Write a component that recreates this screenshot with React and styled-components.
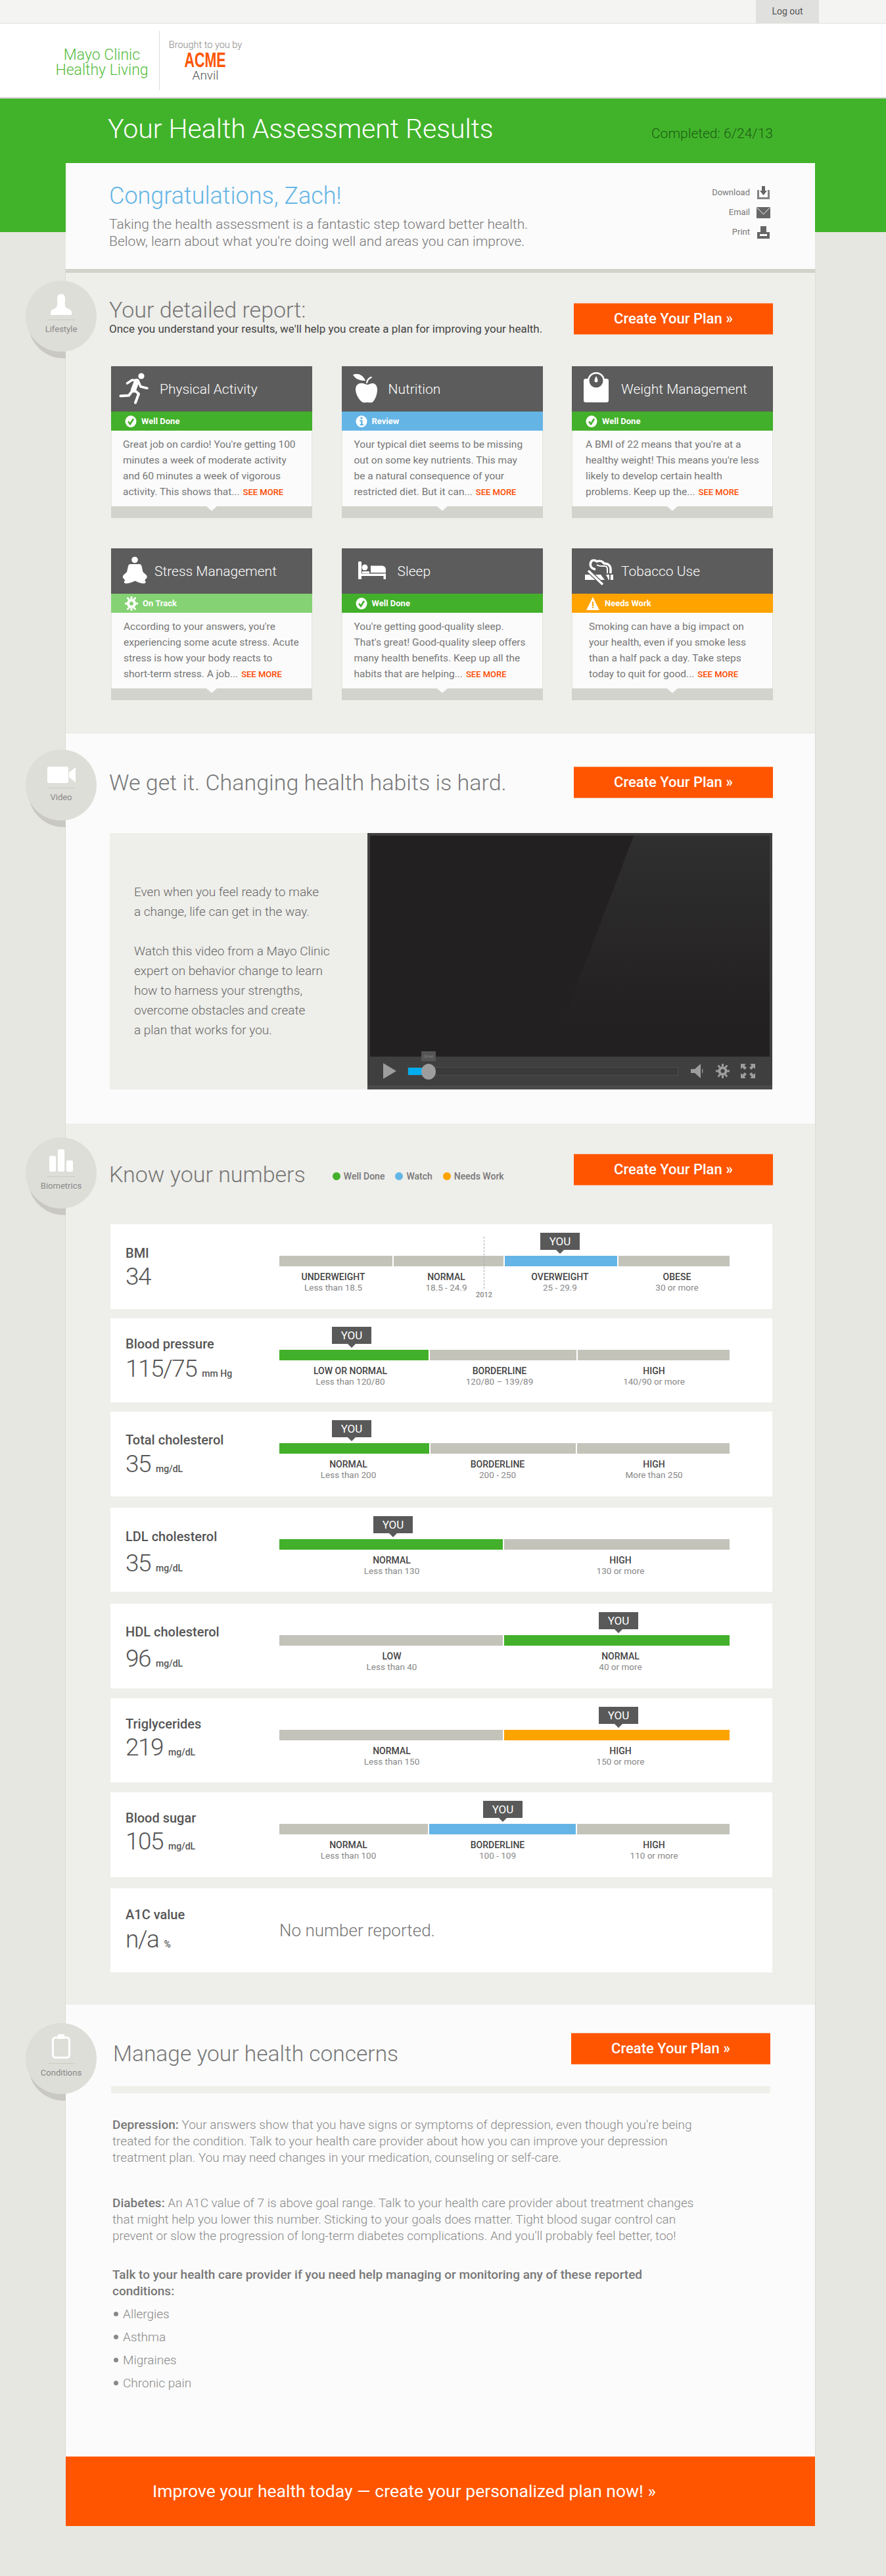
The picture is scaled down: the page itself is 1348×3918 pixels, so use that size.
import React from "react";
import styled, { createGlobalStyle } from "styled-components";

const ORANGE = "#ff5500";
const GREEN = "#42b02a";
const BLUE = "#64b5e6";
const AMBER = "#ffa300";
const GRAY = "#c3c3ba";

const Global = createGlobalStyle`
  body {
    margin: 0;
    background: #e7e7e1;
    font-family: Roboto, "Liberation Sans", Arial, sans-serif;
    font-weight: 300;
    color: #666;
  }
`;

const Page = styled.div`
  width: 1348px;
  padding-bottom: 77px;
`;

const TopBar = styled.div`
  display: flex;
  justify-content: flex-end;
  height: 35px;
  padding-right: 102px;
  background: #f4f4f2;
  border-bottom: 1px solid #e2e2dc;
`;

const LogOut = styled.a`
  width: 96px;
  line-height: 35px;
  text-align: center;
  font-size: 14px;
  font-weight: 400;
  background: #e0e0de;
  color: #555;
`;

const Header = styled.header`
  display: flex;
  align-items: center;
  height: 112px;
  background: #fff;
  border-bottom: 2px solid #ccc;
`;

const Mayo = styled.div`
  width: 160px;
  margin: 5px 7px 0 75px;
  text-align: center;
  font-size: 23px;
  line-height: 23px;
  color: #56bd40;
`;

const Sponsor = styled.div`
  display: flex;
  flex-direction: column;
  align-items: center;
  height: 90px;
  width: 140px;
  padding-top: 15px;
  box-sizing: border-box;
  border-left: 1px solid #ddd;
  color: #888;
  font-size: 14.5px;
  line-height: 14px;
`;

const Acme = styled.div`
  font-family: "Liberation Sans", Arial, sans-serif;
  font-size: 32px;
  line-height: 28px;
  font-weight: 700;
  color: ${ORANGE};
  transform: scaleX(0.67);
  margin-top: 1px;
`;

const Anvil = styled.div`
  font-size: 19px;
  line-height: 20px;
  color: #555;
`;

const Band = styled.div`
  display: flex;
  justify-content: space-between;
  align-items: flex-start;
  height: 203px;
  padding: 20px 172px 0 164px;
  box-sizing: border-box;
  background: #41b32b;
`;

const BandTitle = styled.h1`
  margin: 0;
  font-size: 41px;
  line-height: 52px;
  font-weight: 300;
  color: #fff;
`;

const Completed = styled.div`
  font-size: 21px;
  line-height: 30px;
  margin-top: 18px;
  color: #1d5c12;
`;

const Shell = styled.main`
  width: 1140px;
  margin: -105px 0 0 100px;
`;

const Intro = styled.section`
  display: flex;
  justify-content: space-between;
  height: 161px;
  padding: 28px 68px 0 66px;
  box-sizing: border-box;
  background: #fbfbfb;
`;

const IntroGreeting = styled.h2`
  margin: 0 0 8px;
  font-size: 36px;
  line-height: 44px;
  font-weight: 300;
  color: ${BLUE};
`;

const IntroText = styled.p`
  margin: 0;
  font-size: 21px;
  line-height: 26px;
  color: #777;
`;

const Actions = styled.div`
  display: flex;
  flex-direction: column;
  align-items: flex-end;
  gap: 10px;
  margin-top: 7px;
`;

const Action = styled.a`
  display: flex;
  align-items: center;
  gap: 10px;
  font-size: 13px;
  font-weight: 400;
  line-height: 20px;
  color: #777;
`;

const Section = styled.section`
  position: relative;
  height: ${(p) => p.$h}px;
  padding: ${(p) => p.$pt}px ${(p) => p.$pr || 64}px 0 ${(p) => p.$pl || 66}px;
  box-sizing: border-box;
  background: ${(p) => (p.$white ? "#fbfbfb" : "#eeeeea")};
  border-top: ${(p) => (p.$ruled ? "6px solid #d3d3cb" : "0")};
  box-shadow: 1px 0 0 #dcdcd5, -1px 0 0 #dcdcd5;
`;

const Badge = styled.div`
  position: absolute;
  left: -61px;
  top: ${(p) => p.$top}px;
  width: 108px;
  height: 108px;
  &::before {
    content: "";
    position: absolute;
    left: 4px;
    top: 10px;
    width: 108px;
    height: 108px;
    border-radius: 50%;
    background: #c9c9c2;
    clip-path: inset(0 51px 0 0);
  }
`;

const BadgeFace = styled.div`
  position: relative;
  display: flex;
  flex-direction: column;
  align-items: center;
  height: 100%;
  padding-top: ${(p) => p.$pt || 20}px;
  box-sizing: border-box;
  border-radius: 50%;
  background: #deded9;
`;

const BadgeRule = styled.div`
  width: 42px;
  height: 1px;
  margin: 7px 0 6px;
  background: #cbcbc4;
`;

const BadgeLabel = styled.div`
  font-size: 13px;
  font-weight: 400;
  line-height: 16px;
  color: #888;
`;

const Head = styled.div`
  display: flex;
  justify-content: space-between;
  align-items: ${(p) => p.$align};
  height: ${(p) => p.$h};
`;

const Title = styled.h2`
  margin: ${(p) => p.$mt || 0}px 0 0 ${(p) => p.$ml || 0}px;
  font-size: ${(p) => p.$size || 34}px;
  line-height: 40px;
  font-weight: 300;
  color: #777;
`;

const Sub = styled.p`
  margin: 0;
  font-size: 17px;
  line-height: 18px;
  font-weight: 400;
  color: #444;
`;

const PlanButton = styled.a`
  flex: none;
  width: 303px;
  height: 48px;
  margin-top: ${(p) => p.$mt || 0}px;
  line-height: 46px;
  text-align: center;
  font-size: 22px;
  font-weight: 500;
  color: #fff;
  background: ${ORANGE};
  border-top: 1px solid #ff8a55;
  border-bottom: 1px solid #ff8a55;
  box-sizing: border-box;
`;

const Cards = styled.div`
  display: grid;
  grid-template-columns: repeat(3, 306px);
  column-gap: 44.5px;
  row-gap: 46px;
  margin: 48px 0 0 3px;
`;

const Card = styled.article`
  display: flex;
  flex-direction: column;
  height: 231px;
`;

const CardHead = styled.div`
  display: flex;
  align-items: center;
  height: 69px;
  padding-left: ${(p) => p.$pl}px;
  background: #5c5c5c;
  color: #fff;
  font-size: 21px;
`;

const CardTitle = styled.span`
  margin-left: ${(p) => p.$ml}px;
`;

const Status = styled.div`
  display: flex;
  align-items: center;
  gap: 7px;
  height: 29px;
  padding-left: 21px;
  background: ${(p) => p.$color};
  color: #fff;
  font-size: 13px;
  font-weight: 700;
`;

const CardBody = styled.p`
  position: relative;
  flex: 1;
  margin: 0;
  padding: 9px 0 0 ${(p) => p.$pl}px;
  background: #fbfbfb;
  font-size: 15.5px;
  line-height: 24px;
  font-weight: 400;
  color: #777;
  border-left: 1px solid #e4e4de;
  border-right: 1px solid #e4e4de;
  &::after {
    content: "";
    position: absolute;
    left: 50%;
    bottom: -7px;
    margin-left: -8px;
    border: 8px solid transparent;
    border-bottom: 0;
    border-top: 7px solid #fbfbfb;
  }
`;

const SeeMore = styled.a`
  margin-left: 5px;
  font-size: 13px;
  font-weight: 500;
  color: #ff4a00;
`;

const CardFoot = styled.div`
  height: 18px;
  background: #d3d3cd;
`;

const VideoBlock = styled.div`
  display: flex;
  height: 390px;
  margin: 53px 0 0 1px;
`;

const VideoText = styled.div`
  display: flex;
  flex-direction: column;
  justify-content: center;
  gap: 30px;
  width: 392px;
  padding-left: 37px;
  box-sizing: border-box;
  background: #eeeeea;
  font-size: 19px;
  line-height: 30px;
  color: #666;
`;

const Player = styled.div`
  display: flex;
  flex-direction: column;
  width: 616px;
  background: #3f3f3f;
`;

const Screen = styled.div`
  position: relative;
  height: 336px;
  margin: 4px 4px 0;
  background: #222021;
  overflow: hidden;
  &::after {
    content: "";
    position: absolute;
    inset: 0;
    background: linear-gradient(#302f2f, #222021 85%);
    clip-path: polygon(66% 0, 100% 0, 100% 100%, 45% 100%);
  }
`;

const Controls = styled.div`
  position: relative;
  display: flex;
  align-items: center;
  height: 44px;
  padding: 0 25px 0 24px;
  border-bottom: 6px solid #4a4a4a;
`;

const Track = styled.div`
  position: relative;
  width: 412px;
  height: 13px;
  margin: 0 19px 0 17px;
  background: #3a3a3a;
  border: 1px solid #4c4c4c;
  box-sizing: border-box;
`;

const TrackFill = styled.div`
  height: 100%;
  background: #00aeef;
`;

const Knob = styled.div`
  position: absolute;
  top: -6px;
  left: 20px;
  width: 22px;
  height: 24px;
  border-radius: 50%;
  background: #9d9d9d;
`;

const TimeTip = styled.div`
  position: absolute;
  top: -25px;
  left: 20px;
  width: 22px;
  height: 15px;
  background: #555;
  color: #999;
  font-size: 6px;
  line-height: 15px;
  text-align: center;
`;

const ControlIcons = styled.div`
  display: flex;
  align-items: center;
  gap: 17px;
`;

const LegendRow = styled.div`
  display: flex;
  align-items: center;
  gap: 16px;
  flex: 1;
  margin: 20px 0 0 41px;
`;

const LegendItem = styled.span`
  display: flex;
  align-items: center;
  gap: 5px;
  font-size: 14px;
  font-weight: 500;
  color: #777;
  &::before {
    content: "";
    width: 12px;
    height: 12px;
    border-radius: 50%;
    background: ${(p) => p.$color};
  }
`;

const Rows = styled.div`
  margin: 59px 0 0 2px;
  width: 1007px;
`;

const Row = styled.div`
  display: flex;
  height: 128.5px;
  margin-top: ${(p) => p.$mt}px;
  background: #fff;
`;

const Info = styled.div`
  width: 257px;
  padding: ${(p) => p.$top}px 0 0 23px;
  box-sizing: border-box;
`;

const InfoName = styled.div`
  font-size: 20px;
  line-height: 24px;
  font-weight: 500;
  color: #555;
`;

const InfoValue = styled.div`
  display: flex;
  align-items: baseline;
  gap: 8px;
  margin-top: ${(p) => p.$mt}px;
  font-size: 37px;
  letter-spacing: -1.5px;
  line-height: 40px;
  color: #555;
`;

const Unit = styled.span`
  font-size: 14px;
  font-weight: 500;
  letter-spacing: 0;
  color: #555;
`;

const Scale = styled.div`
  position: relative;
  padding-top: 48px;
  width: 685px;
`;

const Bar = styled.div`
  display: flex;
  gap: 2px;
  height: 16px;
`;

const Segment = styled.div`
  width: ${(p) => p.$w}px;
  background: ${(p) => p.$color};
`;

const Labels = styled.div`
  display: flex;
  margin-top: 8px;
  text-align: center;
`;

const Label = styled.div`
  flex: none;
  width: ${(p) => p.$w}px;
`;

const LabelName = styled.div`
  font-size: 14px;
  line-height: 16px;
  font-weight: 500;
  color: #444;
`;

const LabelSub = styled.div`
  font-size: 13.5px;
  line-height: 16px;
  font-weight: 400;
  color: #888;
`;

const You = styled.div`
  position: absolute;
  top: 13px;
  left: ${(p) => p.$x}px;
  width: 60px;
  margin-left: -30px;
  height: 26px;
  line-height: 26px;
  text-align: center;
  font-size: 17px;
  font-weight: 400;
  color: #fff;
  background: #595959;
  &::after {
    content: "";
    position: absolute;
    left: 50%;
    top: 26px;
    margin-left: -6px;
    border: 6px solid transparent;
    border-bottom: 0;
    border-top: 6px solid #595959;
  }
`;

const Marker = styled.div`
  position: absolute;
  left: 311px;
  top: 19px;
  height: 79px;
  border-left: 1px dashed #aaa;
`;

const MarkerYear = styled.div`
  position: absolute;
  left: 299px;
  top: 101px;
  font-size: 11px;
  font-weight: 500;
  color: #888;
`;

const NoNumber = styled.div`
  font-size: 26px;
  line-height: 128px;
  color: #777;
`;

const Rule = styled.div`
  height: 11px;
  margin: 33px 0 35px;
  background: #f0f0ea;
`;

const Copy = styled.p`
  margin: 0 0 ${(p) => p.$mb}px 2px;
  font-size: 19px;
  line-height: 25px;
  color: #888;
  strong {
    font-weight: 500;
    color: #777;
  }
`;

const Concerns = styled.ul`
  margin: 5px 0 0 2px;
  padding: 0;
  list-style: none;
`;

const Concern = styled.li`
  display: flex;
  align-items: center;
  gap: 7px;
  font-size: 19px;
  line-height: 35px;
  color: #888;
  &::before {
    content: "";
    width: 7px;
    height: 7px;
    margin-left: 2px;
    border-radius: 50%;
    background: #888;
  }
`;

const Banner = styled.a`
  display: block;
  height: 106px;
  padding-left: 132px;
  line-height: 104px;
  font-size: 26.5px;
  font-weight: 400;
  color: #fff;
  background: ${ORANGE};
  border-top: 1px solid #ff8a55;
  box-sizing: border-box;
`;

/* icons, drawn to match the 60x60 crops of the reference */
const Runner = () => (
  <svg width="60" height="60" viewBox="0 0 60 60" fill="none" stroke="#fff" strokeLinecap="round" strokeLinejoin="round">
    <circle cx="43" cy="10" r="4.6" fill="#fff" stroke="none" />
    <path d="M21.5 21 29 16 38 17M38 17l4 9 10 2.5" strokeWidth="3.5" />
    <path d="M36 18 31 31" strokeWidth="8" />
    <path d="M32 31l7 6-5 13.5" strokeWidth="4" />
    <path d="M29 33l-5 6.5-12.5 .8" strokeWidth="4" />
  </svg>
);

const Apple = () => (
  <svg width="60" height="60" viewBox="0 0 60 60" fill="#fff">
    <path d="M14 30c0-7 6-10 11-9 3 .6 5 2 7 2s4-1.5 7-2c4.5-.6 8 3.5 8 9.5 0 7-3 15.5-7 19-2 1.5-5 .5-8 .5s-6 1-8-.5c-5-3.5-10-12-10-19.5z" />
    <path d="M10 8c7-3 15-.5 19 9-7 0-15-1.5-19-9z" />
    <path d="M30 21l2 0c.6-4 3-7 7-8.5l-1-2c-5 2-8 6-8 10.5z" />
  </svg>
);

const WeighScale = () => (
  <svg width="60" height="60" viewBox="0 0 60 60" fill="#fff">
    <path d="M16 14h32c2 0 3 1 3 3v30c0 2-1 3-3 3H16c-2 0-3-1-3-3V17c0-2 1-3 3-3z" />
    <circle cx="32" cy="17" r="13" />
    <circle cx="32" cy="17" r="10.5" fill="#5c5c5c" />
    <path d="M32 10c1.5 3 2.5 5 2.5 7a2.5 2.5 0 0 1-5 0c0-2 1-4 2.5-7z" />
  </svg>
);

const Meditate = () => (
  <svg width="60" height="60" viewBox="0 0 60 60" fill="#fff">
    <circle cx="33" cy="12.5" r="4.8" />
    <path d="M26 19h14c2 0 3 1 3.5 3l2 9 5 4.5c1.5 1.5 1.5 3.5 .5 5l-3 3c3 2 1.500 5-1 5-4 0-8-1.500-13.500-4-5.500 2.500-10 4-14 4-2.500 0-4-3-1-5l-3-3c-1-1.500-1-3.500 .5-5l5-4.500 2-9c.5-2 1.500-3 3.500-3z" />
  </svg>
);

const Bed = () => (
  <svg width="60" height="60" viewBox="0 0 60 60" fill="#fff">
    <rect x="18" y="15" width="5" height="27" rx="1" />
    <rect x="18" y="33.5" width="42" height="3.5" />
    <rect x="56.5" y="33.5" width="3.5" height="8.5" />
    <circle cx="28" cy="24" r="4.5" />
    <path d="M24 30h11v3H24z" />
    <path d="M37 21.5h17c3.5 0 6 2.5 6 6V32H37z" />
  </svg>
);

const NoSmoke = () => (
  <svg width="60" height="60" viewBox="0 0 60 60" fill="none" stroke="#fff">
    <path d="M31 27c-7-1-9-6-7-11 1-3 6-4 9-1 5-2 9 0 11 3 7 0 10 4 10 9v6" strokeWidth="3.5" />
    <path d="M33 20c4 3 8 2 12 2 3 0 4 2 4 5v6" strokeWidth="2" />
    <path d="M15 35h24l6 8H15zM47 35h5v8h-1zM54 35h4v8h-4z" fill="#fff" stroke="none" />
    <path d="M20 29 42 50" stroke="#5c5c5c" strokeWidth="6" />
    <path d="M20 29 42 50" strokeWidth="3.5" />
  </svg>
);

const statusIcons = {
  check: (
    <svg width="18" height="20" viewBox="0 0 18 20">
      <ellipse cx="9" cy="10" rx="8.5" ry="9" fill="#fff" />
      <path d="M5 10l3 4 5-8" fill="none" stroke={GREEN} strokeWidth="2.5" />
    </svg>
  ),
  info: (
    <svg width="18" height="20" viewBox="0 0 18 20">
      <ellipse cx="9" cy="10" rx="8.5" ry="9" fill="#fff" />
      <path d="M7.5 3.5h3v3h-3zM6.5 8h4v6h1.5v2H6.5v-2H8v-4H6.5z" fill={BLUE} />
    </svg>
  ),
  gear: (
    <svg width="20" height="22" viewBox="0 0 20 22" fill="#fff">
      <path d="M8.5 0h3v4h-3zM8.5 18h3v4h-3zM0 9.5h4v3H0zM16 9.5h4v3h-4zM2.5 3l2-2 3 3-2 2zM15.5 1l2 2-3 3-2-2zM2.5 19l3-3 2 2-3 3zM14.5 16l3 3-2 2-3-3z" />
      <circle cx="10" cy="11" r="7" />
      <circle cx="10" cy="11" r="3" fill="#84d273" />
    </svg>
  ),
  warn: (
    <svg width="22" height="20" viewBox="0 0 22 20">
      <path d="M11 0l10 20H1z" fill="#fff" />
      <path d="M10 7h2v7h-2zM10 15h2v2h-2z" fill={AMBER} />
    </svg>
  ),
};

const reportCards = [
  {
    title: "Physical Activity", icon: <Runner />, headPad: 3, ml: 11,
    status: "Well Done", color: GREEN, kind: "check", pad: 17,
    lines: ["Great job on cardio! You're getting 100", "minutes a week of moderate activity", "and 60 minutes a week of vigorous", "activity. This shows that..."],
  },
  {
    title: "Nutrition", icon: <Apple />, headPad: 7, ml: 4,
    status: "Review", color: BLUE, kind: "info", pad: 18,
    lines: ["Your typical diet seems to be missing", "out on some key nutrients. This may", "be a natural consequence of your", "restricted diet. But it can..."],
  },
  {
    title: "Weight Management", icon: <WeighScale />, headPad: 5, ml: 10,
    status: "Well Done", color: GREEN, kind: "check", pad: 20,
    lines: ["A BMI of 22 means that you're at a", "healthy weight! This means you're less", "likely to develop certain health", "problems. Keep up the..."],
  },
  {
    title: "Stress Management", icon: <Meditate />, headPad: 3, ml: 3,
    status: "On Track", color: "#84d273", kind: "gear", pad: 18,
    lines: ["According to your answers, you're", "experiencing some acute stress. Acute", "stress is how your body reacts to", "short-term stress. A job..."],
  },
  {
    title: "Sleep", icon: <Bed />, headPad: 7, ml: 18,
    status: "Well Done", color: GREEN, kind: "check", pad: 18,
    lines: ["You're getting good-quality sleep.", "That's great! Good-quality sleep offers", "many health benefits. Keep up all the", "habits that are helping..."],
  },
  {
    title: "Tobacco Use", icon: <NoSmoke />, headPad: 5, ml: 10,
    status: "Needs Work", color: AMBER, kind: "warn", pad: 25,
    lines: ["Smoking can have a big impact on", "your health, even if you smoke less", "than a half pack a day. Take steps", "today to quit for good..."],
  },
];

const w3 = [216, 238, 232];
const w2 = [342, 354];

const metrics = [
  {
    name: "BMI", value: "34", mt: 0, top: 32, drop: 36, you: 427, marker: true,
    segs: [[172, GRAY], [168, GRAY], [171, BLUE], [170, GRAY]],
    bands: [["UNDERWEIGHT", "Less than 18.5", 164], ["NORMAL", "18.5 - 24.9", 180], ["OVERWEIGHT", "25 - 29.9", 166], ["OBESE", "30 or more", 190]],
  },
  {
    name: "Blood pressure", value: "115/75", unit: "mm Hg", mt: 14, top: 27, drop: 38, you: 110,
    segs: [[227, GREEN], [223, GRAY], [231, GRAY]],
    bands: [["LOW OR NORMAL", "Less than 120/80", w3[0]], ["BORDERLINE", "120/80 – 139/89", w3[1]], ["HIGH", "140/90 or more", w3[2]]],
  },
  {
    name: "Total cholesterol", value: "35", unit: "mg/dL", mt: 14, top: 31, drop: 37, you: 110,
    segs: [[228, GREEN], [221, GRAY], [232, GRAY]],
    bands: [["NORMAL", "Less than 200", w3[0] - 6], ["BORDERLINE", "200 - 250", w3[1] + 6], ["HIGH", "More than 250", w3[2]]],
  },
  {
    name: "LDL cholesterol", value: "35", unit: "mg/dL", mt: 17, top: 32, drop: 41, you: 173,
    segs: [[340, GREEN], [343, GRAY]],
    bands: [["NORMAL", "Less than 130", w2[0]], ["HIGH", "130 or more", w2[1]]],
  },
  {
    name: "HDL cholesterol", value: "96", unit: "mg/dL", mt: 18, top: 30.5, drop: 41, you: 516,
    segs: [[340, GRAY], [343, GREEN]],
    bands: [["LOW", "Less than 40", w2[0]], ["NORMAL", "40 or more", w2[1]]],
  },
  {
    name: "Triglycerides", value: "219", unit: "mg/dL", mt: 15, top: 27, drop: 36, you: 516,
    segs: [[340, GRAY], [343, AMBER]],
    bands: [["NORMAL", "Less than 150", w2[0]], ["HIGH", "150 or more", w2[1]]],
  },
  {
    name: "Blood sugar", value: "105", unit: "mg/dL", mt: 15, top: 27, drop: 36, you: 340,
    segs: [[226, GRAY], [223, BLUE], [232, GRAY]],
    bands: [["NORMAL", "Less than 100", w3[0] - 6], ["BORDERLINE", "100 - 109", w3[1] + 6], ["HIGH", "110 or more", w3[2]]],
  },
];

function PlanHead({ children, stacked }) {
  return (
    <Head $align={stacked ? "flex-start" : "center"} $h={stacked ? "auto" : "48px"}>
      {children}
      <PlanButton $mt={stacked ? 10 : 0}>Create Your Plan »</PlanButton>
    </Head>
  );
}

function SectionBadge({ top, pt, icon, label }) {
  return (
    <Badge $top={top}>
      <BadgeFace $pt={pt}>
        {icon}
        <BadgeRule />
        <BadgeLabel>{label}</BadgeLabel>
      </BadgeFace>
    </Badge>
  );
}

function ReportCard({ card }) {
  return (
    <Card>
      <CardHead $pl={card.headPad}>
        {card.icon}
        <CardTitle $ml={card.ml}>{card.title}</CardTitle>
      </CardHead>
      <Status $color={card.color}>
        {statusIcons[card.kind]}
        {card.status}
      </Status>
      <CardBody $pl={card.pad}>
        {card.lines.map((line, i) => (
          <React.Fragment key={line}>
            {line}
            {i < card.lines.length - 1 ? <br /> : <SeeMore>SEE MORE</SeeMore>}
          </React.Fragment>
        ))}
      </CardBody>
      <CardFoot />
    </Card>
  );
}

function MetricRow({ m }) {
  return (
    <Row $mt={m.mt}>
      <Info $top={m.top}>
        <InfoName>{m.name}</InfoName>
        <InfoValue $mt={m.drop - 32}>
          {m.value}
          {m.unit && <Unit>{m.unit}</Unit>}
        </InfoValue>
      </Info>
      <Scale>
        <You $x={m.you}>YOU</You>
        {m.marker && <Marker />}
        {m.marker && <MarkerYear>2012</MarkerYear>}
        <Bar>
          {m.segs.map(([w, color], i) => (
            <Segment key={i} $w={w} $color={color} />
          ))}
        </Bar>
        <Labels>
          {m.bands.map(([name, sub, w]) => (
            <Label key={name} $w={w}>
              <LabelName>{name}</LabelName>
              <LabelSub>{sub}</LabelSub>
            </Label>
          ))}
        </Labels>
      </Scale>
    </Row>
  );
}

export default function App() {
  return (
    <Page>
      <Global />
      <TopBar>
        <LogOut>Log out</LogOut>
      </TopBar>
      <Header>
        <Mayo>
          Mayo Clinic
          <br />
          Healthy Living
        </Mayo>
        <Sponsor>
          Brought to you by
          <Acme>ACME</Acme>
          <Anvil>Anvil</Anvil>
        </Sponsor>
      </Header>
      <Band>
        <BandTitle>Your Health Assessment Results</BandTitle>
        <Completed>Completed: 6/24/13</Completed>
      </Band>
      <Shell>
        <Intro>
          <div>
            <IntroGreeting>Congratulations, Zach!</IntroGreeting>
            <IntroText>
              Taking the health assessment is a fantastic step toward better health.
              <br />
              Below, learn about what you're doing well and areas you can improve.
            </IntroText>
          </div>
          <Actions>
            <Action>
              Download
              <svg width="21" height="20" viewBox="0 0 21 20" fill="#666">
                <path d="M8 0h5v7h3l-5.5 7L5 7h3z" />
                <path d="M1 6h3v11h13V6h3v14H1z" opacity=".8" />
              </svg>
            </Action>
            <Action>
              Email
              <svg width="21" height="17" viewBox="0 0 21 17">
                <rect width="21" height="17" rx="1" fill="#666" />
                <path d="M1 1l9.5 10L20 1" fill="none" stroke="#fbfbfb" />
              </svg>
            </Action>
            <Action>
              Print
              <svg width="21" height="19" viewBox="0 0 21 19" fill="#666">
                <path d="M6 0h9v9H6z" />
                <path d="M1 9h19v10H1z" />
                <path d="M5 12h11v3H5z" fill="#fbfbfb" />
              </svg>
            </Action>
          </Actions>
        </Intro>

        <Section $h={707} $pt={36} $ruled>
          <SectionBadge
            top={12}
            icon={
              <svg width="34" height="32" viewBox="0 0 34 32" fill="#fff">
                <path d="M17 0c4 0 6 3 6 7 0 6-1 10 1 13 1 3 9 3 9 8v4H1v-4c0-5 8-5 9-8 2-3 1-7 1-13 0-4 2-7 6-7z" />
              </svg>
            }
            label="Lifestyle"
          />
          <PlanHead stacked>
            <div>
              <Title>Your detailed report:</Title>
              <Sub>Once you understand your results, we'll help you create a plan for improving your health.</Sub>
            </div>
          </PlanHead>
          <Cards>
            {reportCards.map((card) => (
              <ReportCard key={card.title} card={card} />
            ))}
          </Cards>
        </Section>

        <Section $h={593} $pt={50} $white>
          <SectionBadge
            top={24}
            pt={26}
            icon={
              <svg width="43" height="25" viewBox="0 0 43 25" fill="#fff">
                <rect width="32" height="25" rx="3" />
                <path d="M33 9l10-8v23l-10-8z" />
              </svg>
            }
            label="Video"
          />
          <PlanHead>
            <Title>We get it. Changing health habits is hard.</Title>
          </PlanHead>
          <VideoBlock>
            <VideoText>
              <div>
                Even when you feel ready to make
                <br />a change, life can get in the way.
              </div>
              <div>
                Watch this video from a Mayo Clinic
                <br />
                expert on behavior change to learn
                <br />
                how to harness your strengths,
                <br />
                overcome obstacles and create
                <br />a plan that works for you.
              </div>
            </VideoText>
            <Player>
              <Screen />
              <Controls>
                <svg width="20" height="24" viewBox="0 0 20 24" fill="#9d9d9d">
                  <path d="M0 0l20 12L0 24z" />
                </svg>
                <Track>
                  <TrackFill style={{ width: 22 }} />
                  <Knob />
                  <TimeTip>00:40</TimeTip>
                </Track>
                <ControlIcons>
                  <svg width="21" height="22" viewBox="0 0 21 22" fill="#9d9d9d">
                    <path d="M0 8h6l9-8v22l-9-8H0zM17 7c2 2 2 6 0 8z" />
                  </svg>
                  <svg width="21" height="22" viewBox="0 0 21 22" fill="#9d9d9d">
                    <path d="M9 0h3v4H9zM9 18h3v4H9zM0 9.5h4v3H0zM17 9.5h4v3h-4zM2.5 3.5l2-2 3 3-2 2zM16.5 1.5l2 2-3 3-2-2zM2.5 18.5l3-3 2 2-3 3zM15.5 15.5l3 3-2 2-3-3z" />
                    <path fillRule="evenodd" d="M10.5 4a7 7 0 1 1 0 14 7 7 0 0 1 0-14zm0 4a3 3 0 1 0 0 6 3 3 0 0 0 0-6z" />
                  </svg>
                  <svg width="22" height="22" viewBox="0 0 22 22" fill="#9d9d9d">
                    <path d="M0 0h8L5.5 2.5 9 6 6 9 2.5 5.5 0 8zM22 0v8l-2.5-2.5L16 9l-3-3 3.5-3.5L14 0zM0 22v-8l2.5 2.5L6 13l3 3-3.5 3.5L8 22zM22 22h-8l2.5-2.5L13 16l3-3 3.5 3.5L22 14z" />
                  </svg>
                </ControlIcons>
              </Controls>
            </Player>
          </VideoBlock>
        </Section>

        <Section $h={1340} $pt={46}>
          <SectionBadge
            top={21}
            pt={18}
            icon={
              <svg width="36" height="34" viewBox="0 0 36 34" fill="#fff">
                <rect x="0" y="10" width="10" height="24" rx="2" />
                <rect x="13" y="0" width="10" height="34" rx="2" />
                <rect x="26" y="17" width="10" height="17" rx="2" />
              </svg>
            }
            label="Biometrics"
          />
          <PlanHead>
            <Title $mt={14}>Know your numbers</Title>
            <LegendRow>
              <LegendItem $color={GREEN}>Well Done</LegendItem>
              <LegendItem $color={BLUE}>Watch</LegendItem>
              <LegendItem $color={AMBER}>Needs Work</LegendItem>
            </LegendRow>
          </PlanHead>
          <Rows>
            {metrics.map((m) => (
              <MetricRow key={m.name} m={m} />
            ))}
            <Row $mt={17}>
              <Info $top={28}>
                <InfoName>A1C value</InfoName>
                <InfoValue $mt={6}>
                  n/a
                  <Unit>%</Unit>
                </InfoValue>
              </Info>
              <NoNumber>No number reported.</NoNumber>
            </Row>
          </Rows>
        </Section>

        <Section $h={687} $pt={43} $pl={69} $pr={68} $white>
          <SectionBadge
            top={28}
            pt={16}
            icon={
              <svg width="28" height="38" viewBox="0 0 28 38" fill="none" stroke="#fff" strokeWidth="3">
                <rect x="1.5" y="6" width="25" height="30.5" rx="4" />
                <path d="M9 1h10v7H9z" fill="#fff" stroke="none" />
              </svg>
            }
            label="Conditions"
          />
          <PlanHead>
            <Title $size={33.5} $mt={16} $ml={3}>Manage your health concerns</Title>
          </PlanHead>
          <Rule />
          <Copy $mb={44}>
            <strong>Depression:</strong> Your answers show that you have signs or symptoms of depression, even though you're being
            <br />
            treated for the condition. Talk to your health care provider about how you can improve your depression
            <br />
            treatment plan. You may need changes in your medication, counseling or self-care.
          </Copy>
          <Copy $mb={34}>
            <strong>Diabetes:</strong> An A1C value of 7 is above goal range. Talk to your health care provider about treatment changes
            <br />
            that might help you lower this number. Sticking to your goals does matter. Tight blood sugar control can
            <br />
            prevent or slow the progression of long-term diabetes complications. And you'll probably feel better, too!
          </Copy>
          <Copy $mb={0}>
            <strong>
              Talk to your health care provider if you need help managing or monitoring any of these reported
              <br />
              conditions:
            </strong>
          </Copy>
          <Concerns>
            <Concern>Allergies</Concern>
            <Concern>Asthma</Concern>
            <Concern>Migraines</Concern>
            <Concern>Chronic pain</Concern>
          </Concerns>
        </Section>

        <Banner>Improve your health today — create your personalized plan now! »</Banner>
      </Shell>
    </Page>
  );
}
